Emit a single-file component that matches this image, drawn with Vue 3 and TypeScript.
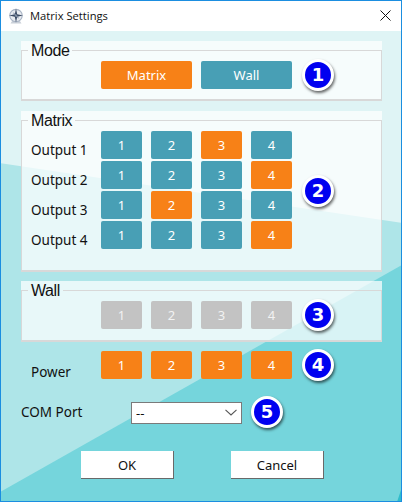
<script setup lang="ts">
const nums = [1, 2, 3, 4];
const outputs = [
  { name: 'Output 1', active: 3 },
  { name: 'Output 2', active: 4 },
  { name: 'Output 3', active: 2 },
  { name: 'Output 4', active: 4 },
];
</script>

<template>
  <div class="window">
    <header class="titlebar">
      <svg class="app-icon" viewBox="0 0 16 16" width="16" height="16" aria-hidden="true">
        <path d="M2.5 15.5h11l-1.6-2.5H4.1Z" fill="#c9cfd8" />
        <circle cx="8" cy="7.5" r="6.2" fill="#e8ebf0" stroke="#a9b4c4" stroke-width="1.2" />
        <path d="M8 .6 9.2 6.3 14.9 7.5 9.2 8.7 8 14.4 6.8 8.7 1.1 7.5 6.8 6.3Z" fill="#3a4a63" />
        <path d="M4.8 4.3 8.7 6.8 11.2 10.7 7.3 8.2Z" fill="#7f8da2" />
      </svg>
      <span class="title">Matrix Settings</span>
      <svg class="close" viewBox="0 0 11 11" width="11" height="11" aria-hidden="true">
        <path d="M.5.5l10 10M10.5.5l-10 10" stroke="#111" stroke-width="1" fill="none" />
      </svg>
    </header>

    <main class="client">
      <svg class="backdrop" viewBox="1 31 400 470" aria-hidden="true">
        <polygon points="0,163 402,223 402,502 0,502" fill="#aee5e8" />
        <polygon points="0,492 402,265 402,502 0,502" fill="#75d5dc" />
        <polygon points="397,502 401,490 401,502" fill="#2fbccb" />
      </svg>

      <section class="panel">
        <fieldset class="group">
          <legend>Mode</legend>
          <div class="row group-row">
            <button class="btn wide orange">Matrix</button>
            <button class="btn wide teal">Wall</button>
            <span class="badge">1</span>
          </div>
        </fieldset>
      </section>

      <section class="panel matrix-panel">
        <fieldset class="group">
          <legend>Matrix</legend>
          <div class="row matrix-row">
            <div class="matrix">
              <template v-for="o in outputs" :key="o.name">
                <span class="label">{{ o.name }}</span>
                <button
                  v-for="n in nums"
                  :key="n"
                  class="btn"
                  :class="n === o.active ? 'orange' : 'teal'"
                >{{ n }}</button>
              </template>
            </div>
            <span class="badge badge-low">2</span>
          </div>
        </fieldset>
      </section>

      <section class="panel wall-panel">
        <fieldset class="group">
          <legend>Wall</legend>
          <div class="row group-row">
            <div class="btns">
              <button v-for="n in nums" :key="n" class="btn gray">{{ n }}</button>
            </div>
            <span class="badge">3</span>
          </div>
        </fieldset>
      </section>

      <div class="row power-row">
        <span class="label power-label">Power</span>
        <div class="btns">
          <button v-for="n in nums" :key="n" class="btn orange">{{ n }}</button>
        </div>
        <span class="badge">4</span>
      </div>

      <div class="row com-row">
        <label class="label com-label" for="com">COM Port</label>
        <div class="select-wrap">
          <select id="com"><option>--</option></select>
          <svg class="chevron" viewBox="0 0 12 7" width="12" height="7" aria-hidden="true">
            <path d="M.5.8 6 6 11.5.8" fill="none" stroke="#555" stroke-width="1.1" />
          </svg>
        </div>
        <span class="badge">5</span>
      </div>

      <footer class="actions">
        <button class="action">OK</button>
        <button class="action">Cancel</button>
      </footer>
    </main>
  </div>
</template>

<style>
html, body { margin: 0; padding: 0; }
</style>

<style scoped>
.window {
  width: 402px;
  height: 502px;
  box-sizing: border-box;
  border: 1px solid #1b8ee0;
  display: flex;
  flex-direction: column;
  font-family: "Noto Sans", "Open Sans", sans-serif;
  color: #111;
  overflow: hidden;
}
.titlebar {
  height: 30px;
  flex: none;
  background: #fff;
  display: flex;
  align-items: center;
  padding: 0 10px 1px 7px;
  box-sizing: border-box;
}
.title {
  font-size: 11.2px;
  margin-left: 6px;
  flex: 1;
  font-family: "Open Sans", "Noto Sans", sans-serif;
}
.client {
  position: relative;
  flex: 1;
  background: #dff4f5;
  padding: 10px 19px 0 20px;
}
.backdrop {
  position: absolute;
  inset: 0;
  width: 100%;
  height: 100%;
}
.panel {
  position: relative;
  height: 60px;
  background: rgba(255, 255, 255, 0.72);
  margin-bottom: 10px;
}
.matrix-panel { height: 161px; margin-bottom: 9px; }
.wall-panel { height: 61px; margin-bottom: 9px; }
.group {
  margin: 0;
  padding: 2px 0 0;
  height: 100%;
  box-sizing: border-box;
  border: 1px solid #d8d8d8;
  border-bottom-width: 2px;
  min-width: 0;
}
legend {
  margin-left: 6px;
  padding: 2px 3px 0;
  font-family: "Liberation Sans", sans-serif;
  font-size: 16px;
  letter-spacing: -0.4px;
  line-height: 16px;
}
.row {
  position: relative;
  display: flex;
  align-items: center;
}
.group-row { padding-left: 79px; height: 28px; }
.matrix-row { padding-left: 9px; }
.btns { display: flex; gap: 9px; }
.btn {
  width: 41px;
  height: 28px;
  padding: 0;
  border: 0;
  border-radius: 2px;
  color: #fff;
  font: 13px/28px "Noto Sans", sans-serif;
}
.btn.wide { width: 91px; }
.btn.wide + .btn.wide { margin-left: 9px; }
.orange { background: #f78117; }
.teal { background: #489fb5; }
.gray { background: #c3c3c3; color: #f2f2f2; }
.matrix {
  display: grid;
  grid-template-columns: 61px repeat(4, 41px);
  grid-auto-rows: 28px;
  column-gap: 9px;
  row-gap: 2px;
}
.matrix .label { margin-right: -9px; }
.label {
  font-size: 13.5px;
  line-height: 18px;
  align-self: end;
  color: #111;
}
.badge {
  flex: none;
  width: 26px;
  height: 26px;
  box-sizing: content-box;
  border: 3px solid #fff;
  border-radius: 50%;
  background: #0000f0;
  box-shadow: 1px 2px 3px rgba(0, 0, 0, 0.6);
  color: #fff;
  font: bold 18px/26px "DejaVu Sans", sans-serif;
  text-align: center;
  margin: -2px 0 -2px 10px;
}
.badge-low { margin-top: 0; }
.power-row {
  padding-left: 10px;
  height: 28px;
}
.power-label { width: 70px; align-self: flex-end; margin-bottom: -2px; }
.com-row {
  height: 22px;
  margin-top: 22px;
}
.com-label { width: 110px; align-self: center; }
.select-wrap { position: relative; width: 111px; height: 22px; }
select {
  appearance: none;
  width: 100%;
  height: 100%;
  box-sizing: border-box;
  border: 1px solid #7a7a7a;
  border-radius: 0;
  background: #fff;
  padding: 0 0 0 4px;
  font: 13px "Noto Sans", sans-serif;
  color: #111;
}
.chevron { position: absolute; right: 5px; top: 8px; }
.select-wrap + .badge { margin-left: 9px; }
.actions {
  position: relative;
  display: flex;
  gap: 57px;
  margin: 28px 0 0 60px;
}
.action {
  width: 93px;
  height: 28px;
  padding: 1px 0 0;
  box-sizing: border-box;
  border: 0;
  border-right: 1px solid #696969;
  border-bottom: 1px solid #696969;
  background: #fff;
  color: #111;
  font: 13px "Noto Sans", sans-serif;
}
</style>
